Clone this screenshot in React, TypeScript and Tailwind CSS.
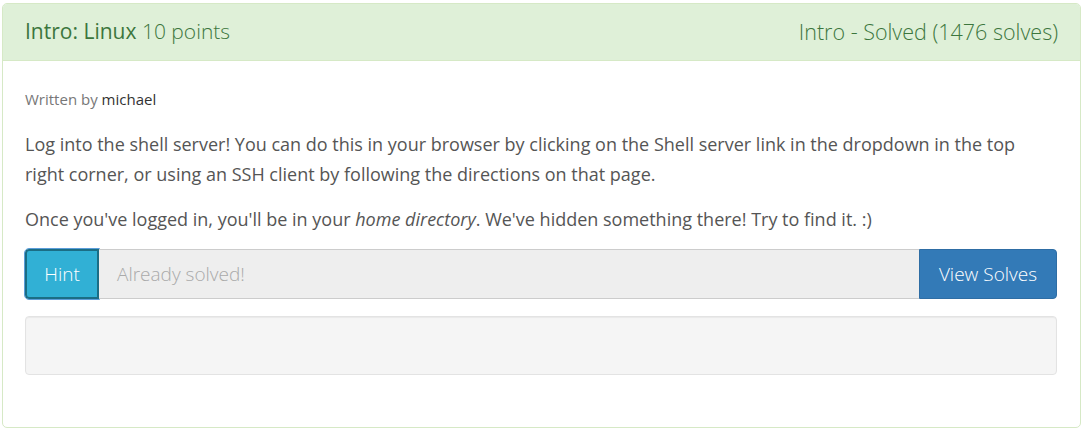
import React from "react";

const font = { fontFamily: "'Open Sans', 'Noto Sans', sans-serif" };

export default function App() {
  return (
    <div className="min-h-[433px] bg-white pt-[3px] pl-[2px] pr-[4px]" style={font}>
      <div className="flex h-[425px] w-[1079px] flex-col overflow-hidden rounded-[5px] border border-[#d6e9c6]">
        <div className="flex h-[57px] items-center justify-between border-b border-[#d6e9c6] bg-[#dff0d8] px-[22px] text-[21px] text-[#3c763d]">
          <div>
            <span className="font-medium">Intro: Linux</span> <span className="font-light">10 points</span>
          </div>
          <div className="text-[21.5px] font-light">Intro - Solved (1476 solves)</div>
        </div>
        <div className="flex flex-1 flex-col px-[22px] pt-[28px] text-[#555]">
          <div className="text-[15px] leading-[21px] text-[#777]">
            Written by <span className="text-[#333]">michael</span>
          </div>
          <p className="mt-[19px] text-[18px] leading-[30px]">
            Log into the shell server! You can do this in your browser by clicking on the Shell server link in the dropdown in the top
            right corner, or using an SSH client by following the directions on that page.
          </p>
          <p className="mt-[15px] text-[18px] leading-[30px]">
            Once you've logged in, you'll be in your <em>home directory</em>. We've hidden something there! Try to find it. :)
          </p>
          <div className="mt-[15px] flex h-[50px] w-[1032px] text-[19px]">
            <button className="w-[74px] rounded-l-[4px] border-2 border-[#1b6d85] bg-[#31b0d5] font-light text-white outline outline-1 outline-[#5b9dd9]">
              Hint
            </button>
            <div className="flex flex-1 items-center border-y border-[#ccc] bg-[#eee] px-[18px] font-light text-[#aaa]">
              Already solved!
            </div>
            <button className="w-[138px] rounded-r-[4px] border border-[#2e6da4] bg-[#337ab7] font-light text-white">
              View Solves
            </button>
          </div>
          <div className="mt-[17px] h-[59px] w-[1032px] rounded-[4px] border border-[#e3e3e3] bg-[#f5f5f5] shadow-[inset_0_1px_1px_rgba(0,0,0,0.05)]" />
        </div>
      </div>
    </div>
  );
}
